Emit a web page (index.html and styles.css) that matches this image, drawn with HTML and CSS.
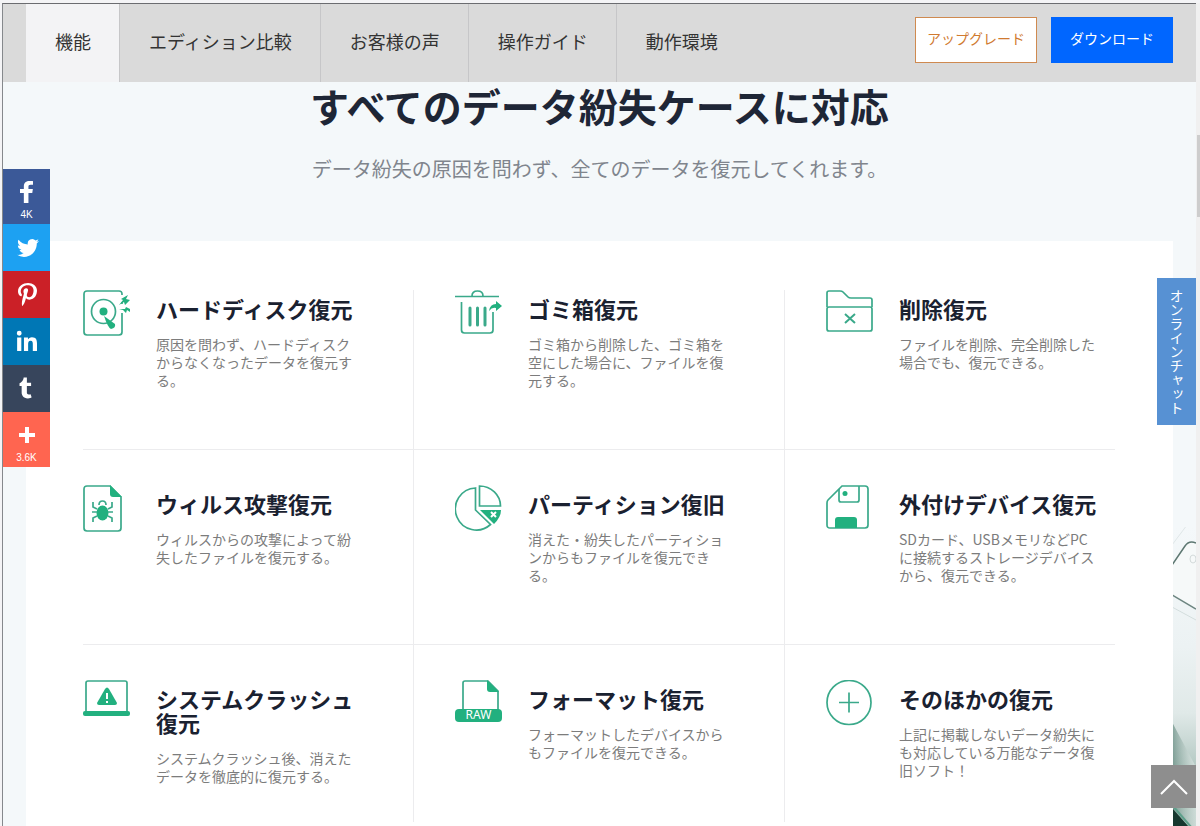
FILE: index.html
```html
<!DOCTYPE html>
<html lang="ja">
<head>
    <meta charset="UTF-8">
    <meta name="viewport" content="width=device-width, initial-scale=1.0">
    <title>すべてのデータ紛失ケースに対応</title>
    <link rel="stylesheet" href="styles.css">
</head>
<body>

<div class="window">
    <div class="page">

        <header class="header">
            <nav class="nav">
                <a class="active" href="#features">機能</a>
                <a href="#compare">エディション比較</a>
                <a href="#voice">お客様の声</a>
                <a href="#guide">操作ガイド</a>
                <a href="#system">動作環境</a>
            </nav>
            <div class="buttons">
                <button class="btn btn-upgrade" type="button">アップグレード</button>
                <button class="btn btn-download" type="button">ダウンロード</button>
            </div>
        </header>

        <main class="section" id="features">
            <!-- 背景のスマートフォン -->
            <svg class="photo" viewBox="0 0 24 300" aria-hidden="true">
                <defs>
                    <linearGradient id="shade" x1="0" y1="0" x2="0" y2="1">
                        <stop offset="0" stop-color="#f4f8fa"/>
                        <stop offset="0.4" stop-color="#ecf2f3"/>
                        <stop offset="0.62" stop-color="#e0e9e8"/>
                        <stop offset="0.8" stop-color="#b4c9c3"/>
                        <stop offset="1" stop-color="#a9c2ba"/>
                    </linearGradient>
                    <linearGradient id="edge" x1="0" y1="0" x2="1" y2="0">
                        <stop offset="0" stop-color="#4f7a6e" stop-opacity="0.6"/>
                        <stop offset="1" stop-color="#ffffff" stop-opacity="0.4"/>
                    </linearGradient>
                </defs>
                <rect width="24" height="300" fill="url(#shade)"/>
                <path d="M0 195 L24 240 V300 H0z" fill="url(#edge)"/>
                <path d="M0 18 L24 -14" stroke="#dfe6e7" fill="none"/>
                <path d="M0 38 L13 19 Q17 13 24 16 V82 L0 68z" fill="#f6f9f9"/>
                <path d="M0 38 L13 19 Q17 13 24 16" stroke="#5d7771" stroke-width="1.5" fill="none"/>
                <path d="M0 68 L24 82" stroke="#6d8580" stroke-width="1.5" fill="none"/>
                <path d="M0 80 L24 93" stroke="#d3dddd" fill="none"/>
                <ellipse cx="21" cy="32" rx="3" ry="4" fill="none" stroke="#d3dada"/>
                <path d="M0 281 L17 300 H0z" fill="#17382f"/>
                <path d="M1 279 L19 300" stroke="#5ea08b" stroke-width="2"/>
            </svg>

            <h1>すべてのデータ紛失ケースに対応</h1>
            <p class="lead">データ紛失の原因を問わず、全てのデータを復元してくれます。</p>

            <div class="card">
                <ul class="features">
                    <li>
                        <svg class="icon" viewBox="0 0 48 48" aria-hidden="true">
                            <path class="line" d="M39 5 V4 Q39 1 36 1 H4 Q1 1 1 4 V42 Q1 45 4 45 H36 Q39 45 39 42 V23 M39 12 V14"/>
                            <circle class="line" cx="20.500" cy="21.500" r="12"/>
                            <circle class="fill" cx="20.500" cy="21.500" r="4"/>
                            <path class="fill" d="M21 26 L32 34 Q33 38 28 39 Q25 38 21 26z"/>
                            <path class="fill" d="M36 15 L40 10 L38 9 L45 5 L43 9 L47 10 L42 15 L41 12z"/>
                            <path class="fill" d="M36 19 L42 19 L43 17 L47 19 V22 L44 20 L43 23 L40 20z"/>
                        </svg>
                        <div class="text">
                            <h2>ハードディスク復元</h2>
                            <p>原因を問わず、ハードディスクからなくなったデータを復元する。</p>
                        </div>
                    </li>
                    <li>
                        <svg class="icon" viewBox="0 0 48 48" aria-hidden="true">
                            <path class="line" d="M0 6.500 H44 M17 6 Q17 1 22.500 1 Q28 1 28 6 M6.500 12 V40 Q6.500 43 9.500 43 H35 Q38 43 38 40 V22"/>
                            <path class="bar" d="M15 18 V35 M22.500 18 V35 M30 18 V35"/>
                            <path class="fill" d="M34 21 Q35 14 41 14 V11 L47 16 L41 21 V18 Q37 17 34 21z"/>
                        </svg>
                        <div class="text">
                            <h2>ゴミ箱復元</h2>
                            <p>ゴミ箱から削除した、ゴミ箱を空にした場合に、ファイルを復元する。</p>
                        </div>
                    </li>
                    <li>
                        <svg class="icon" viewBox="0 0 48 48" aria-hidden="true">
                            <path class="line" d="M1 17 V3 Q1 1 3 1 H14 Q16 1 17 2 L22 7 Q23 8 25 8 H44 Q46 8 46 10 V17 M3 17 H44 Q46 17 46 19 V39 Q46 41 44 41 H3 Q1 41 1 39 V19 Q1 17 3 17z"/>
                            <path class="line thick" d="M19 24 L29 33 M29 24 L19 33"/>
                        </svg>
                        <div class="text">
                            <h2>削除復元</h2>
                            <p>ファイルを削除、完全削除した場合でも、復元できる。</p>
                        </div>
                    </li>
                    <li>
                        <svg class="icon" viewBox="0 0 48 48" aria-hidden="true">
                            <path class="line" d="M27 1 H4 Q1 1 1 4 V43 Q1 46 4 46 H35 Q38 46 38 43 V12z"/>
                            <path class="fill" d="M27 0 L39 12 H30 Q27 12 27 9z"/>
                            <ellipse class="fill" cx="19.500" cy="28" rx="6" ry="7.500"/>
                            <path class="line" d="M16 20 Q16 16 19.500 16 Q23 16 23 20"/>
                            <path class="line" d="M14 24 L10 22 V17 M25 24 L29 22 V17 M14 27 H9 M25 27 H30 M14 31 L10 33 V37 M25 31 L29 33 V37"/>
                        </svg>
                        <div class="text">
                            <h2>ウィルス攻撃復元</h2>
                            <p>ウィルスからの攻撃によって紛失したファイルを復元する。</p>
                        </div>
                    </li>
                    <li>
                        <svg class="icon" viewBox="0 0 48 48" aria-hidden="true">
                            <path class="line" d="M20.500 3 V25 L35.500 39.500 A21 21 0 1 1 20.500 3z"/>
                            <path class="line" d="M24.500 1 V21 H45.500 A21 20 0 0 0 24.500 1z"/>
                            <path class="fill" d="M25 25 H46 Q46 32 39 39z"/>
                            <path class="cross" d="M36 27 L41 32 M41 27 L36 32"/>
                        </svg>
                        <div class="text">
                            <h2>パーティション復旧</h2>
                            <p>消えた・紛失したパーティションからもファイルを復元できる。</p>
                        </div>
                    </li>
                    <li>
                        <svg class="icon" viewBox="0 0 48 48" aria-hidden="true">
                            <path class="line" d="M16 1 H39 Q42 1 42 4 V40 Q42 43 39 43 H4 Q1 43 1 40 V18 Q1 16 2 15 L15 2z"/>
                            <path class="line" d="M13 4 V15 Q13 17 15 17 H31 Q33 17 33 15 V1"/>
                            <circle class="fill" cx="19" cy="8.500" r="2.500"/>
                            <path class="fill" d="M9 43 V35 Q9 32 12 32 H28 Q31 32 31 35 V43z"/>
                        </svg>
                        <div class="text">
                            <h2>外付けデバイス復元</h2>
                            <p>SDカード、USBメモリなどPCに接続するストレージデバイスから、復元できる。</p>
                        </div>
                    </li>
                    <li>
                        <svg class="icon" viewBox="0 0 48 48" aria-hidden="true">
                            <path class="line" d="M3 31 V3 Q3 1 5 1 H42 Q44 1 44 3 V31"/>
                            <rect class="fill" y="31" width="47" height="5" rx="2"/>
                            <path class="fill" d="M22 9 Q24 6 26 9 L34 23 Q34 25 32 25 H16 Q14 25 14 23z"/>
                            <path class="mark" d="M24 13 V19 M24 21 V23"/>
                        </svg>
                        <div class="text">
                            <h2>システムクラッシュ復元</h2>
                            <p>システムクラッシュ後、消えたデータを徹底的に復元する。</p>
                        </div>
                    </li>
                    <li>
                        <svg class="icon" viewBox="0 0 48 48" aria-hidden="true">
                            <path class="line" d="M8 30 V3 Q8 1 10 1 H33 L43 11 V30"/>
                            <path class="fill" d="M32 0 L44 12 H35 Q32 12 32 9z"/>
                            <rect class="fill" y="29" width="47" height="13" rx="4"/>
                            <text class="raw" x="23.500" y="39" text-anchor="middle">RAW</text>
                        </svg>
                        <div class="text">
                            <h2>フォーマット復元</h2>
                            <p>フォーマットしたデバイスからもファイルを復元できる。</p>
                        </div>
                    </li>
                    <li>
                        <svg class="icon" viewBox="0 0 48 48" aria-hidden="true">
                            <circle class="line" cx="23" cy="22.500" r="22"/>
                            <path class="line" d="M13 22.500 H33 M23 12.500 V32.500"/>
                        </svg>
                        <div class="text">
                            <h2>そのほかの復元</h2>
                            <p>上記に掲載しないデータ紛失にも対応している万能なデータ復旧ソフト！</p>
                        </div>
                    </li>
                </ul>
            </div>
        </main>

        <!-- シェアボタン -->
        <div class="share">
            <a class="facebook" href="#facebook" aria-label="Facebook">
                <svg viewBox="0 0 32 32"><path d="M22 5.160c-.406-.054-1.806-.16-3.430-.16-3.400 0-5.733 1.825-5.733 5.170v2.882H9v3.913h3.837V27h4.604V16.965h3.823l.587-3.913h-4.410v-2.500c0-1.123.347-1.903 2.198-1.903H22V5.160z"/></svg>
                <span>4K</span>
            </a>
            <a class="twitter" href="#twitter" aria-label="Twitter">
                <svg viewBox="0 0 32 32"><path d="M27.996 10.116c-.81.36-1.680.602-2.592.71a4.526 4.526 0 0 0 1.984-2.496 9.037 9.037 0 0 1-2.866 1.095 4.513 4.513 0 0 0-7.690 4.116 12.810 12.810 0 0 1-9.300-4.715 4.490 4.490 0 0 0-.612 2.270 4.510 4.510 0 0 0 2.008 3.755 4.495 4.495 0 0 1-2.044-.564v.057a4.515 4.515 0 0 0 3.620 4.425 4.520 4.520 0 0 1-2.040.077 4.517 4.517 0 0 0 4.217 3.134 9.055 9.055 0 0 1-5.604 1.930A9.180 9.180 0 0 1 6 23.850a12.773 12.773 0 0 0 6.918 2.027c8.300 0 12.840-6.876 12.840-12.840 0-.195-.005-.39-.014-.583a9.172 9.172 0 0 0 2.252-2.336"/></svg>
            </a>
            <a class="pinterest" href="#pinterest" aria-label="Pinterest">
                <svg viewBox="0 0 32 32"><path d="M7 13.252c0 1.810.772 4.450 2.895 5.045.074.014.178.04.252.04.49 0 .772-1.270.772-1.630 0-.428-1.174-1.340-1.174-3.123 0-3.705 3.028-6.330 6.947-6.330 3.370 0 5.863 1.782 5.863 5.058 0 2.446-1.054 7.035-4.468 7.035-1.232 0-2.286-.83-2.286-2.018 0-1.742 1.307-3.430 1.307-5.225 0-1.092-.67-1.977-1.916-1.977-1.692 0-2.732 1.770-2.732 3.165 0 .774.104 1.630.476 2.336-.683 2.736-2.080 6.814-2.080 9.633 0 .87.135 1.728.224 2.600l.134.137.207-.07c2.494-3.178 2.405-3.800 3.533-7.960.61 1.077 2.182 1.658 3.430 1.658 5.254 0 7.614-4.770 7.614-9.067C26 7.987 21.755 5 17.094 5 12.017 5 7 8.150 7 13.252z"/></svg>
            </a>
            <a class="linkedin" href="#linkedin" aria-label="LinkedIn">
                <svg viewBox="0 0 32 32"><path d="M26 25.963h-4.185v-6.550c0-1.560-.027-3.570-2.175-3.570-2.180 0-2.510 1.700-2.510 3.460v6.660h-4.182V12.495h4.012v1.840h.058c.558-1.058 1.924-2.174 3.960-2.174 4.240 0 5.022 2.790 5.022 6.417v7.386zM8.230 10.655a2.426 2.426 0 0 1 0-4.855 2.427 2.427 0 0 1 0 4.855zm-2.098 1.840h4.190v13.468h-4.190V12.495z"/></svg>
            </a>
            <a class="tumblr" href="#tumblr" aria-label="Tumblr">
                <svg viewBox="0 0 32 32"><path d="M19.590 22.176c-.392.186-1.140.348-1.695.362-1.682.045-2.008-1.180-2.022-2.070V13.930h4.218v-3.180H15.890V5.403h-3.076c-.05 0-.138.044-.15.157-.18 1.636-.947 4.510-4.133 5.660v2.710h2.124v6.862c0 2.350 1.733 5.688 6.308 5.610 1.544-.028 3.258-.674 3.637-1.230l-1.010-2.996"/></svg>
            </a>
            <a class="more" href="#share" aria-label="共有">
                <svg viewBox="0 0 32 32"><path d="M18 14V8h-4v6H8v4h6v6h4v-6h6v-4h-6z"/></svg>
                <span>3.6K</span>
            </a>
        </div>

        <button class="chat" type="button">オンラインチャット</button>

        <a class="to-top" href="#features" aria-label="トップへ戻る">
            <svg viewBox="0 0 28 16"><path d="M1 15 L14 2 L27 15"/></svg>
        </a>
    </div>

    <div class="scrollbar"><div class="thumb"></div></div>
</div>

</body>
</html>
```
FILE: styles.css
```css
* {
    box-sizing: border-box;
}
body {
    font-family: "Noto Sans CJK JP", sans-serif;
    margin: 0;
    background-color: #f4f4f6;
}
a {
    color: inherit;
    text-decoration: none;
}
button {
    font-family: inherit;
    border: none;
    cursor: pointer;
}
.window {
    display: flex;
    min-height: 100vh;
    padding: 3px 0 0 2px;
}
.page {
    position: relative;
    display: flex;
    flex-direction: column;
    flex: 1;
    border-top: 1px solid #6b6c70;
    border-left: 1px solid #85888c;
}

/* ヘッダー */
.header {
    display: flex;
    justify-content: space-between;
    align-items: flex-start;
    height: 78px;
    padding: 0 23px;
    background-color: #dadada;
}
.nav {
    display: flex;
    height: 100%;
}
.nav a {
    display: flex;
    align-items: center;
    padding: 0 28px 4px 29px;
    border-right: 1px solid #c6c6c8;
    font-size: 18px;
    color: #333;
}
.nav a:last-child {
    border-right: none;
}
.nav .active {
    background-color: #f3f3f5;
}
.buttons {
    display: flex;
    gap: 14px;
    padding-top: 13px;
}
.btn {
    width: 122px;
    height: 46px;
    padding: 0 0 4px;
    font-size: 14px;
}
.btn-upgrade {
    background-color: #fff;
    border: 1px solid #cf8a50;
    color: #d07a30;
}
.btn-download {
    background-color: #06f;
    color: #fff;
}

/* 機能一覧 */
.section {
    position: relative;
    display: flex;
    flex-direction: column;
    flex: 1;
    padding: 0 23px;
    background-color: #f4f8fa;
    text-align: center;
}
.photo {
    position: absolute;
    right: 0;
    bottom: 0;
    width: 24px;
    height: 300px;
}
h1 {
    margin: 0;
    font-size: 39px;
    line-height: 46px;
    color: #1e2636;
}
.lead {
    margin: 29px 0 60px;
    font-size: 20px;
    line-height: 24px;
    color: #80858d;
}
.card {
    position: relative;
    flex: 1;
    padding: 49px 58px 5px 57px;
    background-color: #fff;
    text-align: left;
}
.features {
    display: grid;
    grid-template-columns: 331fr 371fr 330fr;
    margin: 0;
    padding: 0;
    list-style: none;
}
.features li {
    display: flex;
    gap: 25px;
    min-height: 195px;
    padding: 35px 0 0 41px;
    border-right: 1px solid #ececee;
    border-bottom: 1px solid #ececee;
}
.features li:nth-child(-n+3) {
    min-height: 160px;
    padding-top: 0;
}
.features li:nth-child(3n+1) {
    padding-left: 0;
}
.features li:nth-child(3n) {
    border-right: none;
}
.features li:nth-child(n+7) {
    min-height: 177px;
    border-bottom: none;
}
.icon {
    flex: none;
    width: 48px;
    height: 48px;
}
.line {
    fill: none;
    stroke: #3aa98a;
    stroke-width: 1.7;
}
.thick {
    stroke-width: 2;
}
.bar {
    fill: none;
    stroke: #3aa98a;
    stroke-width: 3;
    stroke-linecap: round;
}
.fill {
    fill: #22b07f;
}
.cross {
    fill: none;
    stroke: #fff;
    stroke-width: 2;
}
.mark {
    fill: none;
    stroke: #fff;
    stroke-width: 2;
}
.raw {
    fill: #fff;
    font-family: "Noto Sans", sans-serif;
    font-size: 12px;
}
.text {
    width: 198px;
    padding-top: 6px;
}
h2 {
    margin: 0 0 15px;
    font-size: 22px;
    line-height: 24px;
    color: #1a2130;
}
.text p {
    margin: 0;
    font-size: 14px;
    line-height: 18px;
    color: #7c7c7c;
}

/* 左のシェアボタン */
.share {
    position: absolute;
    top: 165px;
    left: 0;
    width: 47px;
}
.share a {
    display: flex;
    flex-direction: column;
    align-items: center;
    height: 47px;
    padding-top: 7px;
    color: #fff;
}
.share svg {
    flex: none;
    width: 32px;
    height: 32px;
    fill: #fff;
}
.share span {
    font-family: "Liberation Sans", Arial, sans-serif;
    font-size: 10px;
    line-height: 14px;
}
.share .facebook,
.share .more {
    height: 55px;
}
.facebook {
    background-color: #3b5998;
}
.twitter {
    background-color: #1da1f2;
}
.pinterest {
    background-color: #cb2027;
}
.linkedin {
    background-color: #0077b5;
}
.tumblr {
    background-color: #37455c;
}
.more {
    background-color: #ff6550;
}

/* 右側の固定ボタン */
.chat {
    position: absolute;
    top: 274px;
    right: 0;
    width: 39px;
    height: 147px;
    padding: 0;
    background-color: #5791d3;
    color: #fff;
    font-size: 14px;
    writing-mode: vertical-rl;
}
.to-top {
    position: absolute;
    right: 0;
    bottom: 19px;
    display: flex;
    align-items: center;
    justify-content: center;
    width: 45px;
    height: 43px;
    background-color: #8e8e8e;
}
.to-top svg {
    width: 28px;
    height: 16px;
    fill: none;
    stroke: #fff;
    stroke-width: 2;
}
.scrollbar {
    width: 4px;
    padding: 132px 0 0 1px;
    background-color: #f0f0f0;
}
.thumb {
    height: 82px;
    background-color: #cdcdcd;
}
```
